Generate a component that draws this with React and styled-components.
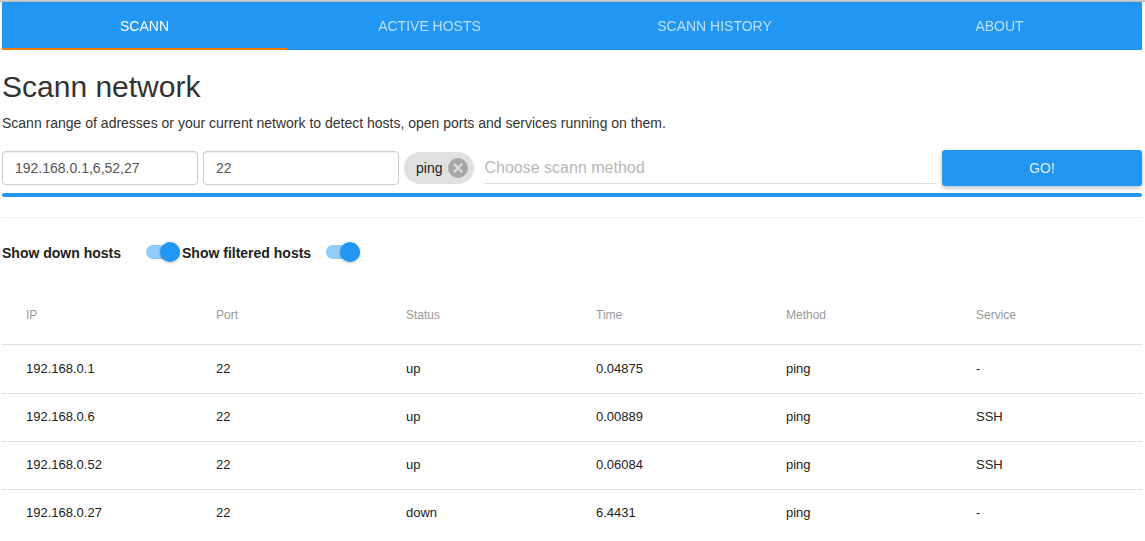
import React from 'react';
import styled, { createGlobalStyle } from 'styled-components';

const GlobalStyle = createGlobalStyle`
  *, *::before, *::after { box-sizing: border-box; }
  body {
    margin: 0;
    overflow: hidden;
    background: #fff;
    color: #212121;
    font-family: "Liberation Sans", Arial, sans-serif;
    font-size: 14px;
    line-height: 20px;
  }
`;

const Page = styled.div`
  height: 541px;
  border-top: 1px solid #cecece;
`;

const Content = styled.main`
  border-top: 1px solid #b9b9b9;
  padding: 0 3px 0 2px;
`;

const Tabs = styled.nav`
  display: flex;
  height: 48px;
  background: #2196f3;
`;

const Tab = styled.button`
  flex: 1;
  padding: 2px 0 0;
  border: 0;
  border-bottom: 2px solid ${(p) => (p.$active ? '#f57c00' : 'transparent')};
  background: none;
  color: ${(p) => (p.$active ? '#fff' : 'rgba(255, 255, 255, 0.7)')};
  font: inherit;
  text-transform: uppercase;
  will-change: transform;
`;

const Title = styled.h1`
  margin: 20px 0 10px;
  color: #333;
  font-size: 30px;
  font-weight: 400;
  line-height: 33px;
`;

const Lead = styled.p`
  margin: 0;
  color: #333;
`;

const Form = styled.form`
  display: flex;
  align-items: center;
  gap: 5px;
  height: 36px;
  margin-top: 17px;
`;

const Field = styled.input`
  width: 196px;
  height: 34px;
  padding: 6px 12px;
  border: 1px solid #ccc;
  border-radius: 4px;
  outline: 0;
  color: #555;
  font: inherit;
  box-shadow: inset 0 1px 1px rgba(0, 0, 0, 0.075);
`;

const Chip = styled.span`
  display: flex;
  align-items: center;
  gap: 6px;
  height: 32px;
  width: 70px;
  padding: 0 6px 0 12px;
  border-radius: 16px;
  background: #e0e0e0;
  color: #212121;
`;

const ChipRemove = styled.svg`
  flex: none;
  width: 20px;
  height: 20px;
`;

const MethodInput = styled.input`
  flex: 1;
  min-width: 0;
  height: 32px;
  margin-left: 5px;
  padding: 0 0 0 0.5px;
  border: 0;
  border-bottom: 1px solid #dedede;
  outline: 0;
  background: none;
  color: #212121;
  font: 16px "Liberation Sans", Arial, sans-serif;
  &::placeholder { color: #b8b8b8; opacity: 1; }
`;

const GoButton = styled.button`
  width: 200px;
  height: 36px;
  padding: 0;
  border: 0;
  border-radius: 3px;
  background: #2196f3;
  color: rgba(255, 255, 255, 0.87);
  font: inherit;
  box-shadow: 0 2px 5px 0 rgba(0, 0, 0, 0.26);
  will-change: transform;
`;

const Progress = styled.div`
  height: 4px;
  margin-top: 7px;
  border-radius: 4px;
  background: #2196f3;
`;

const Divider = styled.hr`
  margin: 20px 0 0;
  border: 0;
  border-top: 1px solid #eee;
`;

const Filters = styled.div`
  display: flex;
  align-items: center;
  gap: 2px;
  height: 20px;
  margin-top: 24px;
`;

const Filter = styled.label`
  display: flex;
  align-items: center;
  justify-content: space-between;
  width: 178px;
  font-weight: 700;
`;

const FilterName = styled.span`
  padding-top: 2px;
`;

const SwitchTrack = styled.span`
  display: flex;
  align-items: center;
  justify-content: flex-end;
  width: 34px;
  height: 14px;
  border-radius: 8px;
  background: #90cbf9;
`;

const SwitchThumb = styled.span`
  flex: none;
  width: 20px;
  height: 20px;
  border-radius: 50%;
  background: #2196f3;
  box-shadow: 0 1px 3px rgba(0, 0, 0, 0.26);
`;

const Table = styled.table`
  width: 100%;
  margin-top: 23px;
  border-spacing: 0;
  table-layout: fixed;
  font-size: 13px;
`;

const HeadCell = styled.th`
  height: 59px;
  padding: 0 0 0 24px;
  color: #999;
  font-size: 12px;
  font-weight: 400;
  text-align: left;
`;

const Cell = styled.td`
  height: ${(p) => (p.$first ? 49 : 48)}px;
  padding: ${(p) => (p.$first ? 14 : 13)}px 0 0 24px;
  border-top: 1px solid #e0e0e0;
  vertical-align: top;
`;

const tabs = ['Scann', 'Active hosts', 'Scann history', 'About'];
const columns = ['IP', 'Port', 'Status', 'Time', 'Method', 'Service'];
const hosts = [
  ['192.168.0.1', '22', 'up', '0.04875', 'ping', '-'],
  ['192.168.0.6', '22', 'up', '0.00889', 'ping', 'SSH'],
  ['192.168.0.52', '22', 'up', '0.06084', 'ping', 'SSH'],
  ['192.168.0.27', '22', 'down', '6.4431', 'ping', '-'],
];

function Switch() {
  return (
    <SwitchTrack>
      <SwitchThumb />
    </SwitchTrack>
  );
}

export default function App() {
  return (
    <Page>
      <GlobalStyle />
      <Content>
        <Tabs>
          {tabs.map((name, i) => (
            <Tab key={name} $active={i === 0}>{name}</Tab>
          ))}
        </Tabs>
        <Title>Scann network</Title>
        <Lead>
          Scann range of adresses or your current network to detect hosts, open ports and services running on them.
        </Lead>
        <Form onSubmit={(e) => e.preventDefault()}>
          <Field defaultValue="192.168.0.1,6,52,27" />
          <Field defaultValue="22" />
          <Chip>
            ping
            <ChipRemove viewBox="0 0 20 20">
              <circle cx="10" cy="10" r="10" fill="#a6a6a6" />
              <path d="M5.8 5.8l8.4 8.4M14.2 5.8l-8.4 8.4" stroke="#e0e0e0" strokeWidth="2.1" />
            </ChipRemove>
          </Chip>
          <MethodInput placeholder="Choose scann method" />
          <GoButton>GO!</GoButton>
        </Form>
        <Progress />
        <Divider />
        <Filters>
          <Filter><FilterName>Show down hosts</FilterName><Switch /></Filter>
          <Filter><FilterName>Show filtered hosts</FilterName><Switch /></Filter>
        </Filters>
        <Table>
          <thead>
            <tr>{columns.map((c) => <HeadCell key={c}>{c}</HeadCell>)}</tr>
          </thead>
          <tbody>
            {hosts.map((h, row) => (
              <tr key={h[0]}>
                {h.map((v, i) => <Cell key={i} $first={row === 0}>{v}</Cell>)}
              </tr>
            ))}
          </tbody>
        </Table>
      </Content>
    </Page>
  );
}
